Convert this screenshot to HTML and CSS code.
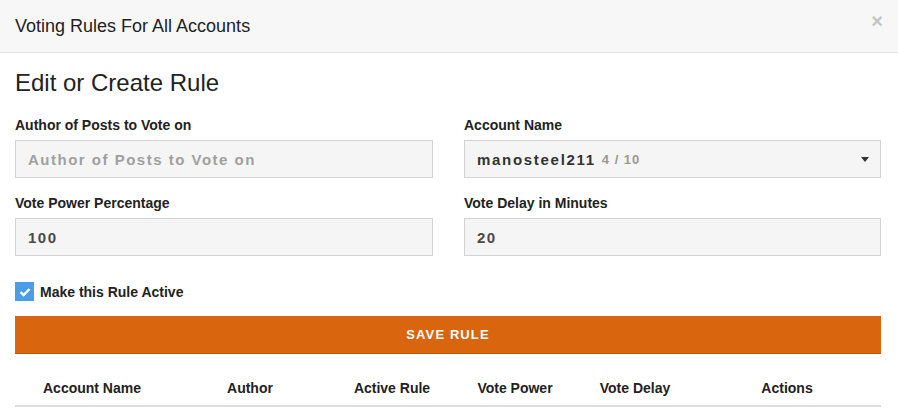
FILE: index.html
```html
<!DOCTYPE html>
<html lang="en">
<head>
  <meta charset="UTF-8">
  <meta name="viewport" content="width=device-width, initial-scale=1.0">
  <title>Voting Rules</title>
  <link rel="stylesheet" href="styles.css">
</head>
<body>
  <div class="modal">
    <div class="modal-header">
      <h4>Voting Rules For All Accounts</h4>
      <span class="close">&times;</span>
    </div>

    <div class="modal-body">
      <h2>Edit or Create Rule</h2>

      <div class="form-grid">
        <div class="field">
          <label for="author">Author of Posts to Vote on</label>
          <input type="text" id="author" placeholder="Author of Posts to Vote on">
        </div>
        <div class="field">
          <label>Account Name</label>
          <div class="select-box">
            <span class="account">manosteel211</span>
            <span class="count">4 / 10</span>
            <span class="caret"></span>
          </div>
        </div>
        <div class="field">
          <label for="power">Vote Power Percentage</label>
          <input type="text" id="power" value="100">
        </div>
        <div class="field">
          <label for="delay">Vote Delay in Minutes</label>
          <input type="text" id="delay" value="20">
        </div>
      </div>

      <div class="check-row">
        <span class="checkbox">
          <svg width="12" height="10" viewBox="0 0 12 10"><path d="M1.5 5.2 L4.6 8 L10.5 2" fill="none" stroke="#fff" stroke-width="2.4"/></svg>
        </span>
        <span class="check-label">Make this Rule Active</span>
      </div>

      <button type="submit" class="save-btn">Save Rule</button>

      <table class="rules">
        <thead>
          <tr>
            <th class="c1">Account Name</th>
            <th class="c2">Author</th>
            <th class="c3">Active Rule</th>
            <th class="c4">Vote Power</th>
            <th class="c5">Vote Delay</th>
            <th class="c6">Actions</th>
          </tr>
        </thead>
      </table>
    </div>
  </div>
</body>
</html>
```

FILE: styles.css
```css
body {
  margin: 0;
  font-family: 'Liberation Sans', Arial, sans-serif;
  background-color: #fff;
  color: #222;
}

.modal {
  width: 898px;
  height: 408px;
  overflow: hidden;
}

/* Header */
.modal-header {
  height: 53px;
  box-sizing: border-box;
  background-color: #f7f7f7;
  border-bottom: 1px solid #e3e3e3;
  display: flex;
  align-items: center;
  justify-content: space-between;
  padding: 0 15px;
}

.modal-header h4 {
  margin: 0;
  font-size: 18px;
  font-weight: normal;
  color: #222;
}

.close {
  font-size: 20px;
  font-weight: bold;
  color: #c4c4c4;
  margin-top: -9px;
  margin-right: 0;
}

/* Body */
.modal-body {
  padding: 0 17px 0 15px;
}

.modal-body h2 {
  margin: 15px 0 0;
  font-size: 24px;
  font-weight: normal;
  line-height: 30px;
  color: #222;
}

.form-grid {
  display: grid;
  grid-template-columns: 418px 417px;
  column-gap: 31px;
  row-gap: 17px;
  margin-top: 19px;
}

.field label {
  display: block;
  font-size: 14px;
  font-weight: bold;
  line-height: 16px;
  margin-bottom: 7px;
  color: #222;
}

.field input,
.select-box {
  width: 100%;
  height: 38px;
  box-sizing: border-box;
  border: 1px solid #d3d3d3;
  background-color: #f5f5f5;
  padding: 0 12px;
  font-family: 'Liberation Sans', Arial, sans-serif;
  font-size: 15px;
  font-weight: bold;
  letter-spacing: 1.5px;
  color: #4a4a4a;
  outline: none;
}

.field input::placeholder {
  color: #a0a0a0;
}

.select-box {
  display: flex;
  align-items: center;
  gap: 6px;
}

.select-box .account {
  color: #333;
  letter-spacing: 1.7px;
}

.select-box .count {
  font-size: 13px;
  color: #999;
  letter-spacing: 1px;
}

.select-box .caret {
  margin-left: auto;
  margin-right: -1px;
  width: 0;
  height: 0;
  border-left: 4px solid transparent;
  border-right: 4px solid transparent;
  border-top: 5px solid #333;
}

/* Checkbox */
.check-row {
  display: flex;
  align-items: center;
  gap: 6px;
  margin-top: 26px;
}

.checkbox {
  width: 19px;
  height: 19px;
  background-color: #4d9de6;
  display: flex;
  align-items: center;
  justify-content: center;
}

.check-label {
  font-size: 14px;
  font-weight: bold;
  color: #222;
}

/* Save button */
.save-btn {
  display: block;
  width: 100%;
  height: 38px;
  margin-top: 15px;
  border: none;
  border-bottom: 1px solid #b9560c;
  background-color: #d9650f;
  color: #fff;
  font-family: 'Liberation Sans', Arial, sans-serif;
  font-size: 13px;
  font-weight: bold;
  letter-spacing: 1.1px;
  text-transform: uppercase;
  cursor: pointer;
}

/* Rules table */
.rules {
  width: 100%;
  border-collapse: collapse;
  margin-top: 16px;
}

.rules th {
  font-size: 14px;
  font-weight: bold;
  color: #222;
  text-align: center;
  height: 35px;
  padding: 0;
  border-bottom: 2px solid #ddd;
}

.rules .c1 { width: 154px; }
.rules .c2 { width: 162px; }
.rules .c3 { width: 122px; }
.rules .c4 { width: 124px; }
.rules .c5 { width: 116px; }
.rules .c6 { width: 188px; }
```
